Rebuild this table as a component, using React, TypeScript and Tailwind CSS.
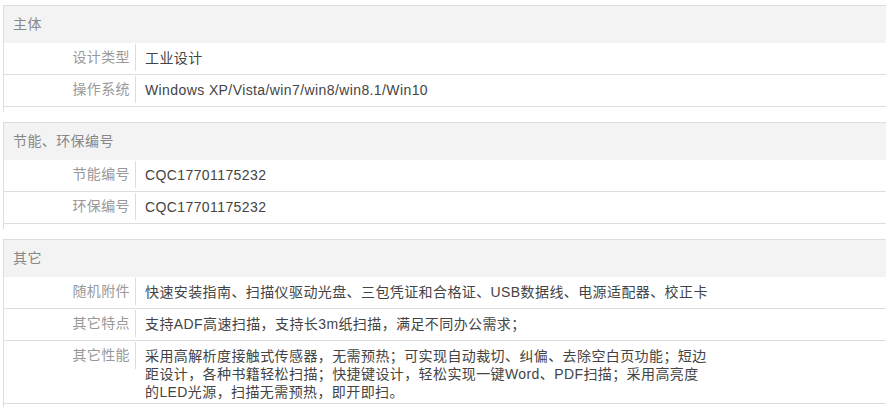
import React from "react";

interface Row {
  label: string;
  value: string;
}

interface Section {
  title: string;
  rows: Row[];
}

const sections: Section[] = [
  {
    title: "主体",
    rows: [
      { label: "设计类型", value: "工业设计" },
      { label: "操作系统", value: "Windows XP/Vista/win7/win8/win8.1/Win10" },
    ],
  },
  {
    title: "节能、环保编号",
    rows: [
      { label: "节能编号", value: "CQC17701175232" },
      { label: "环保编号", value: "CQC17701175232" },
    ],
  },
  {
    title: "其它",
    rows: [
      {
        label: "随机附件",
        value: "快速安装指南、扫描仪驱动光盘、三包凭证和合格证、USB数据线、电源适配器、校正卡",
      },
      { label: "其它特点", value: "支持ADF高速扫描，支持长3m纸扫描，满足不同办公需求；" },
      {
        label: "其它性能",
        value:
          "采用高解析度接触式传感器，无需预热；可实现自动裁切、纠偏、去除空白页功能；短边距设计，各种书籍轻松扫描；快捷键设计，轻松实现一键Word、PDF扫描；采用高亮度的LED光源，扫描无需预热，即开即扫。",
      },
    ],
  },
];

function SpecSection({ title, rows }: Section) {
  return (
    <div className="border-t border-l border-[#dddddd] pb-[5px] mb-[10px]">
      {/* Header */}
      <div className="h-[37px] bg-[#f3f3f3] flex items-center pl-[9px] text-[#888888]">
        {title}
      </div>

      {/* Rows */}
      {rows.map((row) => (
        <div key={row.label} className="flex items-start min-h-[32px] border-b border-[#dddddd]">
          <div className="w-[132px] shrink-0 mt-[1px] h-[27px] border-r border-[#dddddd] flex items-center justify-end pr-[5px] text-[#999999]">
            {row.label}
          </div>
          <div className="w-[575px] pl-[9px] pt-[6px] pb-[2px] leading-[18px] text-[#444444]">
            {row.value}
          </div>
        </div>
      ))}
    </div>
  );
}

export default function App() {
  return (
    <div
      className="w-[893px] h-[407px] overflow-hidden bg-white pt-[5px] pl-[3px] pr-[7px] text-[14px] tracking-[0.4px]"
      style={{ fontFamily: '"Liberation Sans", "Noto Sans CJK SC", sans-serif' }}
    >
      {sections.map((s) => (
        <SpecSection key={s.title} title={s.title} rows={s.rows} />
      ))}
    </div>
  );
}
